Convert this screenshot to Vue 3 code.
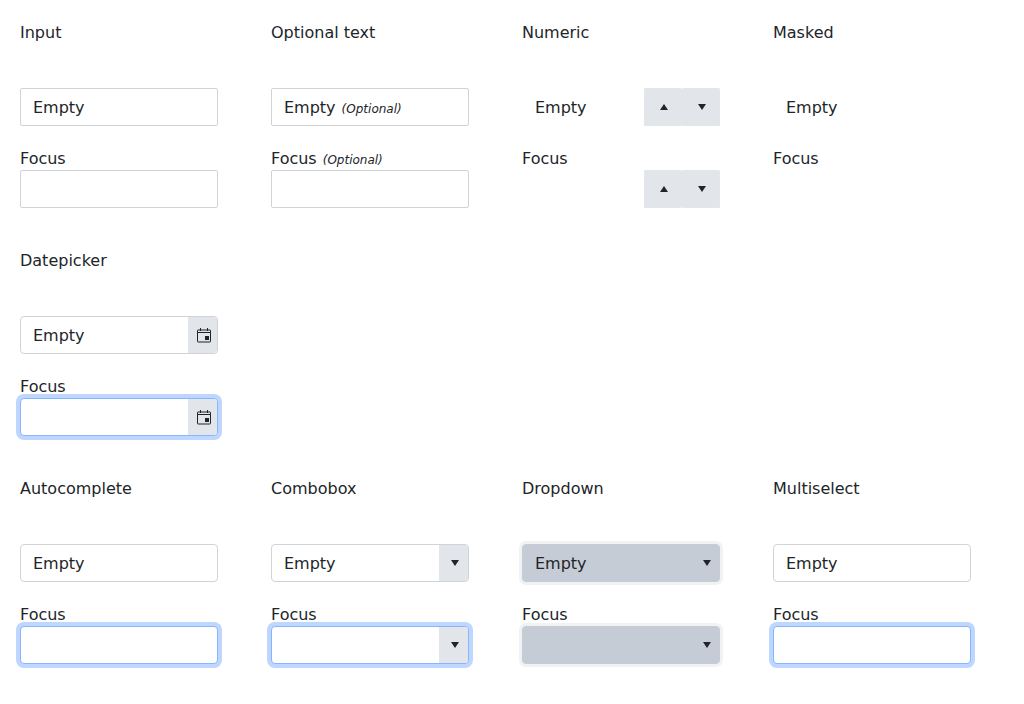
<script setup>
const sections = [
  { cells: [
    { title: 'Input', kind: 'plain' },
    { title: 'Optional text', kind: 'optional' },
    { title: 'Numeric', kind: 'numeric' },
    { title: 'Masked', kind: 'masked' },
  ] },
  { cells: [{ title: 'Datepicker', kind: 'date' }] },
  { cells: [
    { title: 'Autocomplete', kind: 'auto' },
    { title: 'Combobox', kind: 'combo' },
    { title: 'Dropdown', kind: 'dropdown' },
    { title: 'Multiselect', kind: 'auto' },
  ] },
]
</script>

<template>
  <main class="page">
    <section v-for="(section, s) in sections" :key="s" class="grid">
      <div v-for="cell in section.cells" :key="cell.title" class="cell">
        <div class="title">{{ cell.title }}</div>
        <template v-for="state in ['Empty', 'Focus']" :key="state">
          <div v-if="state === 'Focus'" class="label">
            Focus<em v-if="cell.kind === 'optional'" class="opt">(Optional)</em>
          </div>
          <div class="field" :class="[cell.kind, state === 'Focus' ? 'is-focus' : '']">
            <span class="value">
              <template v-if="state === 'Empty'">Empty<em v-if="cell.kind === 'optional'" class="opt">(Optional)</em></template>
            </span>
            <template v-if="cell.kind === 'numeric'">
              <span class="spin up"><svg width="8" height="6" viewBox="0 0 8 6"><path d="M4 0 8 6H0z" /></svg></span>
              <span class="spin down"><svg width="8" height="6" viewBox="0 0 8 6"><path d="M0 0h8L4 6z" /></svg></span>
            </template>
            <span v-if="cell.kind === 'date'" class="addon">
              <svg width="14" height="16" viewBox="0 0 14 16">
                <path d="M1 3h12a.5.5 0 0 1 .5.5v11a.5.5 0 0 1-.5.5H1a.5.5 0 0 1-.5-.5v-11A.5.5 0 0 1 1 3zM.5 5.500h13" fill="none" stroke="#212529" stroke-width="1" />
                <path d="M3 1h1v3H3zM10 1h1v3h-1zM8 9h4v4H8z" fill="#212529" />
              </svg>
            </span>
            <span v-if="cell.kind === 'combo'" class="addon">
              <svg width="8" height="6" viewBox="0 0 8 6"><path d="M0 0h8L4 6z" /></svg>
            </span>
            <span v-if="cell.kind === 'dropdown'" class="caret">
              <svg width="8" height="6" viewBox="0 0 8 6"><path d="M0 0h8L4 6z" /></svg>
            </span>
          </div>
        </template>
      </div>
    </section>
  </main>
</template>

<style>
html, body { margin: 0; background: #fff; }
</style>

<style scoped>
.page {
  padding: 20px 0 0 20px;
  font-family: "DejaVu Sans", sans-serif;
  font-size: 16px;
  line-height: 24px;
  color: #212529;
}
.grid {
  display: grid;
  grid-template-columns: repeat(4, 251px);
  margin-bottom: 40px;
}
.title { margin-bottom: 44px; }
.label { margin-top: 20px; height: 24px; }
.title, .label, .value { transform: rotate(0.01deg) translateY(0.7px); }
.opt {
  margin-left: 6px;
  font-size: 12px;
  line-height: 1;
  font-style: italic;
}
.field {
  box-sizing: border-box;
  display: flex;
  align-items: stretch;
  width: 198px;
  height: 38px;
  border: 1px solid #ced4da;
  background: #fff;
}
.value {
  flex: 1;
  padding: 0 12px;
  line-height: 36px;
  white-space: nowrap;
}
.plain, .optional { border-radius: 2px; }
.date, .auto, .combo { border-radius: 4px; }
.numeric, .masked { border-color: transparent; }
.spin {
  display: flex;
  align-items: center;
  justify-content: center;
  flex: none;
  width: 38px;
  margin: -1px 0;
  padding-left: 1px;
  box-sizing: border-box;
  background: #e2e5e9;
  border-radius: 1.5px;
}
.numeric .spin.down { margin-right: -1px; }
.addon {
  display: flex;
  align-items: center;
  justify-content: center;
  width: 29px;
  padding-left: 2px;
  box-sizing: border-box;
  background: #e2e5e9;
  border-radius: 0 3px 3px 0;
}
.dropdown {
  background: #c6ccd5;
  border-color: #c6ccd5;
  border-radius: 4px;
  box-shadow: 0 0 0 3px #f1f2f4;
}
.caret {
  display: flex;
  align-items: center;
  justify-content: center;
  width: 29px;
  padding-left: 4px;
  box-sizing: border-box;
}
.masked.is-focus { visibility: hidden; }
.date.is-focus, .auto.is-focus, .combo.is-focus {
  border-color: #86b7fe;
  box-shadow: 0 0 0 4px #bfd7fe;
}
svg { fill: #212529; }
</style>
